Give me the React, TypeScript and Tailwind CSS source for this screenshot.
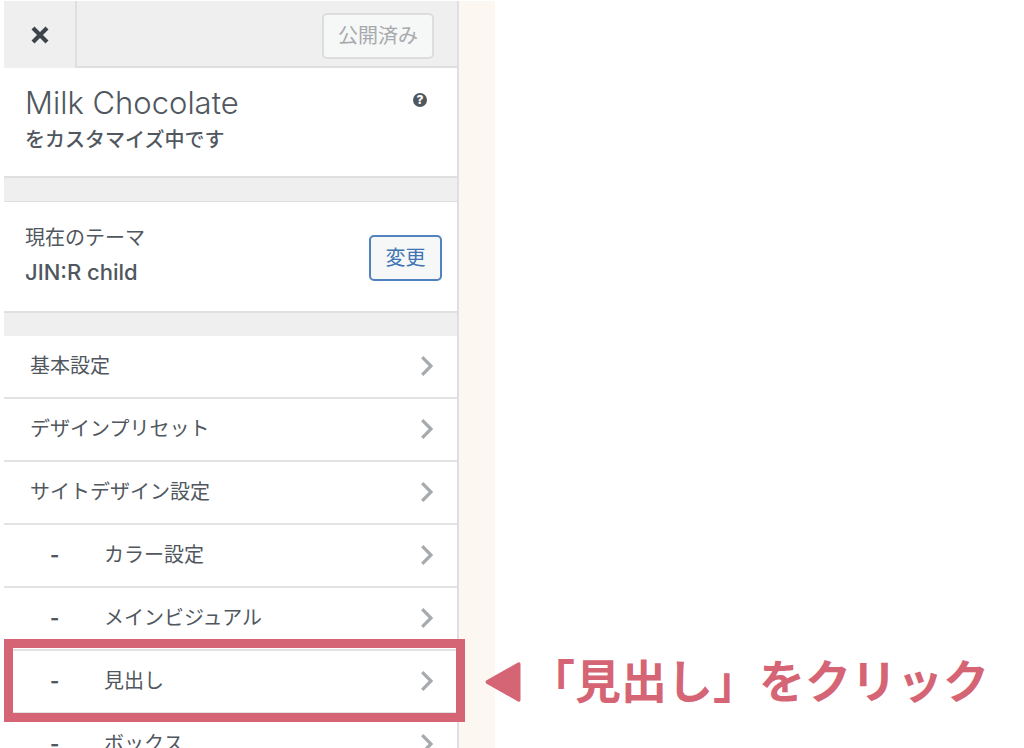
import { clsx } from "clsx"

const sections = [
  { label: "基本設定" },
  { label: "デザインプリセット" },
  { label: "サイトデザイン設定" },
  { label: "カラー設定", sub: true },
  { label: "メインビジュアル", sub: true },
  { label: "見出し", sub: true, marked: true },
  { label: "ボックス", sub: true },
]

function CloseIcon() {
  return (
    <svg className="size-[18px]" viewBox="0 0 18 18" fill="none" stroke="currentColor" strokeWidth="4.2" aria-hidden="true">
      <path d="M2 2 16 16M16 2 2 16" />
    </svg>
  )
}

function Chevron() {
  return (
    <svg className="w-3 h-5 shrink-0 text-[#a7aaad]" viewBox="0 0 12 20" fill="none" stroke="currentColor" strokeWidth="3.2" aria-hidden="true">
      <path d="M1.2 1.2 10 10 1.2 18.8" />
    </svg>
  )
}

function Callout() {
  return (
    <>
      <div className="pointer-events-none absolute -top-3 -bottom-[10px] left-0 -right-2 border-[9px] border-[#d56575]" />
      <div className="pointer-events-none absolute left-full top-0 bottom-0 ml-7 flex items-center whitespace-nowrap text-[#d56575]">
        <svg className="w-9 h-10 shrink-0" viewBox="0 0 36 40" fill="currentColor" aria-hidden="true">
          <path d="M1.2 18.6 33 .5Q35.500-.3 35.500 2V38Q35.500 40.300 33 39.500L1.200 21.400Q0 20 1.200 18.600Z" />
        </svg>
        <p className="ml-2 pb-0.5 text-[46px] leading-none font-bold">「見出し」をクリック</p>
      </div>
    </>
  )
}

function Header() {
  return (
    <header className="flex h-[67px] bg-[#efefef]">
      <button type="button" aria-label="閉じる" className="flex w-[71px] items-center justify-center text-[#3c434a]">
        <CloseIcon />
      </button>
      <div className="flex flex-1 items-center justify-end border-l-2 border-b-2 border-[#dfdfe0] pr-[23px] pt-1">
        <button type="button" disabled className="h-[46px] w-28 rounded-[5px] border-2 border-[#dcdedd] bg-[#f6f7f7] text-xl leading-none text-[#a7aaad]">
          公開済み
        </button>
      </div>
    </header>
  )
}

export default function App() {
  return (
    <main className="flex h-screen overflow-hidden bg-white pl-1 pt-px text-[#50575e] font-['Inter','Noto_Sans_CJK_JP',sans-serif]">
      <aside className="w-[455px] shrink-0 border-r-2 border-[#dfdfe3]">
        <Header />
        <section className="flex h-[110px] items-start justify-between border-b-2 border-[#dfdfe0] pl-[21px] pr-[30px] pt-4">
          <div>
            <h1 className="text-[31px] leading-[38px] font-light">Milk Chocolate</h1>
            <p className="text-xl leading-9 font-medium">をカスタマイズ中です</p>
          </div>
          <button type="button" aria-label="ヘルプ" className="mt-[9px] flex size-[14px] items-center justify-center rounded-full bg-[#50575e] text-xs leading-none font-extrabold text-white">
            ?
          </button>
        </section>
        <div className="h-6 border-b border-[#dfdfe0] bg-[#efefef]" />
        <section className="flex h-[111px] items-center justify-between border-b-2 border-[#dfdfe0] pl-[21px] pr-[15px] pt-0.5">
          <div className="pb-1">
            <p className="text-xl leading-8">現在のテーマ</p>
            <h2 className="text-[22px] leading-9 font-medium">JIN:R child</h2>
          </div>
          <button type="button" className="h-[46px] w-[73px] rounded-[5px] border-2 border-[#4f82be] bg-[#f6f7f7] text-xl leading-none text-[#3f74b5]">
            変更
          </button>
        </section>
        <div className="h-[23px] bg-[#efefef]" />
        <ul>
          {sections.map((s) => (
            <li key={s.label} className="relative h-[63px] border-b-2 border-[#e3e3e4]">
              <button
                type="button"
                className={clsx("flex h-full w-full items-center pr-6 pb-0.5 text-left text-xl leading-none", s.sub ? "pl-[46px]" : "pl-[26px]")}
              >
                {s.sub && <span className="w-[54px] font-bold">-</span>}
                <span className="flex-1">{s.label}</span>
                <Chevron />
              </button>
              {s.marked && <Callout />}
            </li>
          ))}
        </ul>
      </aside>
      <div className="w-9 shrink-0 bg-[#fdf7f1]" />
    </main>
  )
}
